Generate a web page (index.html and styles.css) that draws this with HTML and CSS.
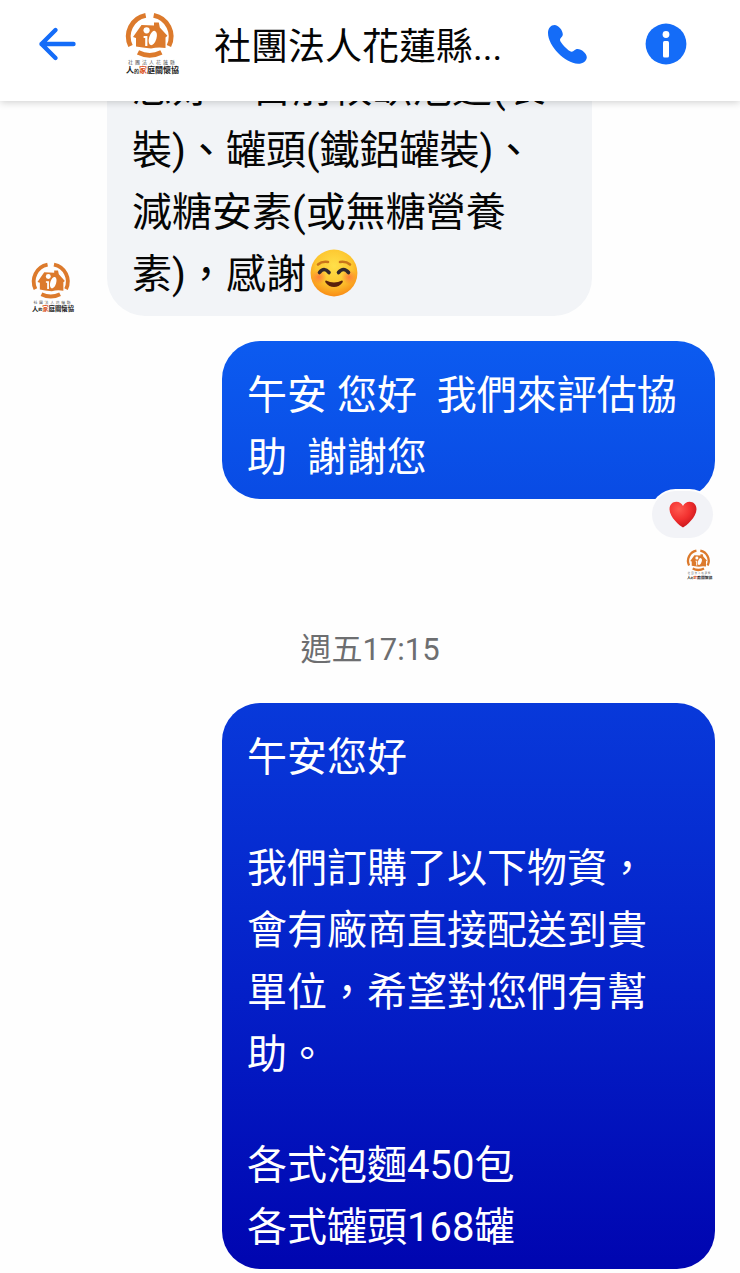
FILE: index.html
```html
<!DOCTYPE html>
<html lang="zh-Hant">
<head>
    <meta charset="UTF-8">
    <meta name="viewport" content="width=device-width, initial-scale=1.0">
    <title>社團法人花蓮縣</title>
    <link rel="stylesheet" href="styles.css">
</head>
<body>
    <svg class="symbols" aria-hidden="true">
        <symbol id="logo" viewBox="0 0 60 64">
            <g fill="none" stroke="#dc7a2c" stroke-width="4.8">
                <path d="M25.7 3.4A21.5 21.5 0 0 0 10.5 34"/>
                <path d="M33.7 3.4A21.5 21.5 0 0 1 48.9 34"/>
                <path d="M18 40.4Q29.7 46.2 41.4 40.4"/>
            </g>
            <path fill="#dc7a2c" d="M13 25L21.5 13L34 13.6V10.6H38.8L39.8 15.5L47.4 23.8L45.5 25.5V36Q38 34.5 31 36.6Q22 35.8 16 34.6V26Z"/>
            <circle cx="26.6" cy="18.3" r="3.1" fill="#fff"/>
            <path fill="#fff" d="M23.6 24H27.4V34H25.2V26H23.6Z"/>
            <ellipse cx="32.8" cy="26" rx="3.7" ry="7.4" fill="#fff" transform="rotate(17 32.8 26)"/>
            <text x="8" y="52.4" font-size="5" letter-spacing="2" fill="#555">社團法人花蓮縣</text>
            <text x="6" y="61.4" font-size="8" font-weight="700" fill="#222">人<tspan font-size="5">的</tspan><tspan fill="#dc5a2c">家</tspan>庭關懷協</text>
        </symbol>
    </svg>

    <header class="topbar">
        <button class="icon-btn back" aria-label="返回">
            <svg width="40" height="36" viewBox="0 0 40 36" fill="none" stroke="#146cf8" stroke-width="4.4" stroke-linecap="round" stroke-linejoin="round">
                <path d="M36.500 18H4.500M18.500 4L4.500 18L18.500 32"/>
            </svg>
        </button>
        <svg class="logo-header"><use href="#logo"/></svg>
        <h1 class="title">社團法人花蓮縣...</h1>
        <button class="icon-btn call" aria-label="通話">
            <svg width="40" height="40" viewBox="0 0 40 40" fill="#146cf8">
                <path d="M1 9C1 4 4 1 7.5 1C11.5 1 15.8 6.3 15.8 10.3C15.8 13 13 13.8 13 16C13 18.5 21.6 27.5 24.5 27.7C27 27.8 27.8 25 30.5 25C34.5 25 39.8 29.5 39.8 33.2C39.8 37 35.5 40 31 39.8C18 39.2 1 22 1 9Z"/>
            </svg>
        </button>
        <button class="icon-btn info" aria-label="資訊">
            <svg width="42" height="42" viewBox="0 0 42 42">
                <circle cx="21" cy="21" r="20.4" fill="#146cf8"/>
                <circle cx="21" cy="11.5" r="3.4" fill="#fff"/>
                <rect x="18" y="18" width="6" height="16.5" rx="1.5" fill="#fff"/>
            </svg>
        </button>
    </header>

    <main class="chat">
        <div class="row incoming">
            <svg class="logo-avatar"><use href="#logo"/></svg>
            <div class="bubble gray">
                <p>您好，目前較缺泡麵(袋裝)、罐頭(鐵鋁罐裝)、減糖安素(或無糖營養素)，感謝<svg class="emoji" viewBox="0 0 48 48" role="img" aria-label="微笑">
                    <defs>
                        <radialGradient id="face" cx="50%" cy="35%" r="65%">
                            <stop offset="0" stop-color="#ffe04a"/>
                            <stop offset=".6" stop-color="#fdc62f"/>
                            <stop offset="1" stop-color="#f98c16"/>
                        </radialGradient>
                        <radialGradient id="blush">
                            <stop offset="0" stop-color="#ff6a3c" stop-opacity=".75"/>
                            <stop offset="1" stop-color="#ff6a3c" stop-opacity="0"/>
                        </radialGradient>
                    </defs>
                    <circle cx="24" cy="24" r="23.4" fill="url(#face)"/>
                    <circle cx="9" cy="28" r="7.5" fill="url(#blush)"/>
                    <circle cx="39" cy="28" r="7.5" fill="url(#blush)"/>
                    <g fill="none" stroke-linecap="round">
                        <path stroke="#c9751a" stroke-width="2.6" d="M8 15.5Q12 12 18 13M40 15.5Q36 12 30 13"/>
                        <path stroke="#33282c" stroke-width="3.6" d="M9.5 23.5Q14 17.5 19 23.5M28.5 23.5Q33.5 17.5 38.5 23.5"/>
                    </g>
                    <path fill="#5a210c" d="M16 31.5Q24 35.5 32 31.5Q33.5 31.5 32.5 33.5Q29 38 24 38Q19 38 15.5 33.5Q14.5 31.5 16 31.5Z"/>
                </svg></p>
            </div>
        </div>

        <div class="row outgoing">
            <div class="bubble blue">
                <p>午安 您好&nbsp; 我們來評估協助&nbsp; 謝謝您</p>
                <span class="reaction">
                    <svg width="28" height="27" viewBox="0 0 28 27" role="img" aria-label="愛心">
                        <defs>
                            <radialGradient id="heart" cx="35%" cy="28%" r="75%">
                                <stop offset="0" stop-color="#ff5a50"/>
                                <stop offset=".55" stop-color="#f2302f"/>
                                <stop offset="1" stop-color="#c9161c"/>
                            </radialGradient>
                        </defs>
                        <path fill="url(#heart)" d="M14 26.5C11 25 .5 16.5 .5 8.3C.5 3.5 3.8 .8 7.3 .8C10.5 .8 12.8 2.5 14 5C15.2 2.5 17.5 .8 20.7 .8C24.2 .8 27.5 3.5 27.5 8.3C27.5 16.5 17 25 14 26.5Z"/>
                    </svg>
                </span>
            </div>
        </div>

        <div class="seen">
            <svg class="logo-seen"><use href="#logo"/></svg>
        </div>

        <time class="stamp">週五17:15</time>

        <div class="row outgoing">
            <div class="bubble navy">
                <p>午安您好</p>
                <p>我們訂購了以下物資，會有廠商直接配送到貴單位，希望對您們有幫助。</p>
                <p>各式泡麵450包<br>各式罐頭168罐</p>
            </div>
        </div>
    </main>
</body>
</html>
```

FILE: styles.css
```css
* {
    box-sizing: border-box;
}
body {
    margin: 0;
    background: #fefefe;
    font-family: Roboto, 'Noto Sans CJK TC', sans-serif;
    color: #050505;
}
p, h1 {
    margin: 0;
}
.symbols {
    position: absolute;
    width: 0;
    height: 0;
}

/* top bar */
.topbar {
    position: sticky;
    top: 0;
    z-index: 2;
    display: flex;
    align-items: center;
    height: 101px;
    padding: 0 53px 14px 37px;
    background: #fff;
    box-shadow: 0 1px 8px rgba(0, 0, 0, 0.2);
}
.icon-btn {
    display: flex;
    flex: none;
    padding: 0;
    border: none;
    background: none;
    cursor: pointer;
}
.logo-header {
    flex: none;
    width: 60px;
    height: 64px;
    margin: 0 34px 0 43px;
}
.title {
    flex: 1;
    padding-top: 8px;
    font-size: 37px;
    font-weight: 400;
    line-height: 56px;
    white-space: nowrap;
}
.call {
    margin-right: 58px;
}

/* messages */
.chat {
    display: flex;
    flex-direction: column;
    margin-top: -67px;
    padding: 0 25px 4px 25px;
}
.row {
    display: flex;
    align-items: flex-end;
}
.incoming {
    padding-right: 123px;
    margin-bottom: 25px;
}
.outgoing {
    padding-left: 197px;
}
.bubble {
    position: relative;
    flex: 1;
    padding: 24px 30px 10px 25px;
    border-radius: 38px;
    font-size: 40px;
    line-height: 62px;
}
.bubble p + p {
    margin-top: 49px;
}
.gray {
    background: #f2f4f7;
}
.blue {
    background: linear-gradient(#0c5bf0, #094be4);
    color: #fff;
}
.navy {
    background: linear-gradient(#0839da, #0420c8 50%, #0005b0);
    color: #fff;
}
.logo-avatar {
    flex: none;
    width: 48px;
    height: 51px;
    margin: 0 32px 3px 2px;
}
.emoji {
    width: 48px;
    height: 48px;
    margin-left: 4px;
    vertical-align: -9px;
}
.reaction {
    position: absolute;
    right: 2px;
    bottom: -39px;
    display: flex;
    align-items: center;
    justify-content: center;
    width: 61px;
    height: 47px;
    border-radius: 24px;
    background: #f2f3f7;
    box-shadow: 0 0 0 2px #fefefe;
}
.seen {
    display: flex;
    justify-content: flex-end;
    margin-top: 50px;
}
.logo-seen {
    width: 29px;
    height: 31px;
    margin-right: 2px;
}
.stamp {
    margin: 50px 0 46px;
    font-size: 31px;
    line-height: 40px;
    height: 27px;
    text-align: center;
    color: #6d6e70;
}
```
